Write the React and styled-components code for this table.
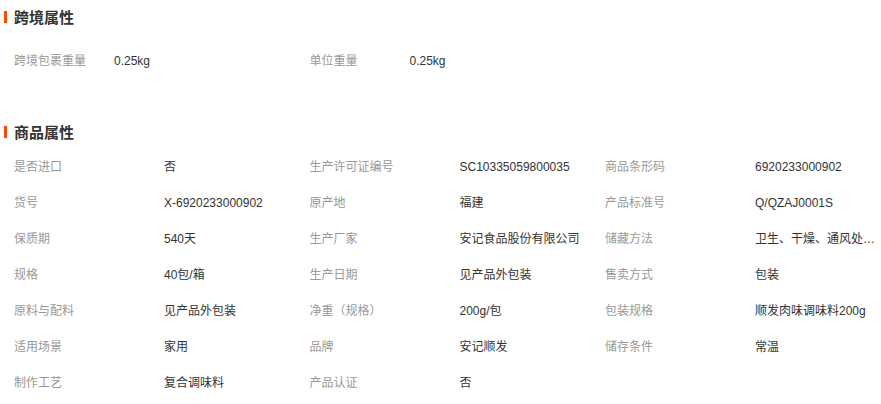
import styled, { createGlobalStyle } from "styled-components";

const GlobalStyle = createGlobalStyle`
  body {
    margin: 0;
    background: #fff;
    font-family: "Liberation Sans", "Noto Sans CJK SC", Arial, sans-serif;
    font-size: 12px;
    color: #333;
  }
`;

const crossBorder = [
  ["跨境包裹重量", "0.25kg"],
  ["单位重量", "0.25kg"],
];

const goods = [
  ["是否进口", "否"],
  ["生产许可证编号", "SC10335059800035"],
  ["商品条形码", "6920233000902"],
  ["货号", "X-6920233000902"],
  ["原产地", "福建"],
  ["产品标准号", "Q/QZAJ0001S"],
  ["保质期", "540天"],
  ["生产厂家", "安记食品股份有限公司"],
  ["储藏方法", "卫生、干燥、通风处保存"],
  ["规格", "40包/箱"],
  ["生产日期", "见产品外包装"],
  ["售卖方式", "包装"],
  ["原料与配料", "见产品外包装"],
  ["净重（规格）", "200g/包"],
  ["包装规格", "顺发肉味调味料200g"],
  ["适用场景", "家用"],
  ["品牌", "安记顺发"],
  ["储存条件", "常温"],
  ["制作工艺", "复合调味料"],
  ["产品认证", "否"],
];

const App = () => {
  return (
    <Page>
      <GlobalStyle />
      <Section>
        <Title>跨境属性</Title>
        <Grid $pad={9}>
          {crossBorder.map(([k, v]) => (
            <Item key={k}>
              <Label $w={100}>{k}</Label>
              <Value>{v}</Value>
            </Item>
          ))}
        </Grid>
      </Section>
      <Section $top={36}>
        <Title>商品属性</Title>
        <Grid $pad={0}>
          {goods.map(([k, v]) => (
            <Item key={k}>
              <Label $w={150}>{k}</Label>
              <Value>{v}</Value>
            </Item>
          ))}
        </Grid>
      </Section>
    </Page>
  );
};

export default App;

const Page = styled.div`
  width: 881px;
  overflow: hidden;
`;

const Section = styled.div`
  margin-top: ${(p) => p.$top || 0}px;
`;

const Title = styled.h3`
  position: relative;
  margin: 0;
  padding-left: 14px;
  height: 34px;
  line-height: 34px;
  font-size: 15px;
  font-weight: bold;
  color: #333;
  font-family: "Noto Sans CJK SC", sans-serif;

  &::before {
    content: "";
    position: absolute;
    left: 4px;
    top: 11px;
    width: 3px;
    height: 12px;
    background: #ff4a00;
  }
`;

const Grid = styled.div`
  display: grid;
  grid-template-columns: repeat(3, 295.5px);
  padding: ${(p) => p.$pad}px 0 0 14px;
`;

const Item = styled.div`
  display: flex;
  height: 36px;
  line-height: 36px;
  overflow: hidden;
`;

const Label = styled.span`
  flex: 0 0 ${(p) => p.$w}px;
  color: #999;
`;

const Value = styled.span`
  max-width: 121px;
  color: #333;
  white-space: nowrap;
  overflow: hidden;
  text-overflow: ellipsis;
`;
